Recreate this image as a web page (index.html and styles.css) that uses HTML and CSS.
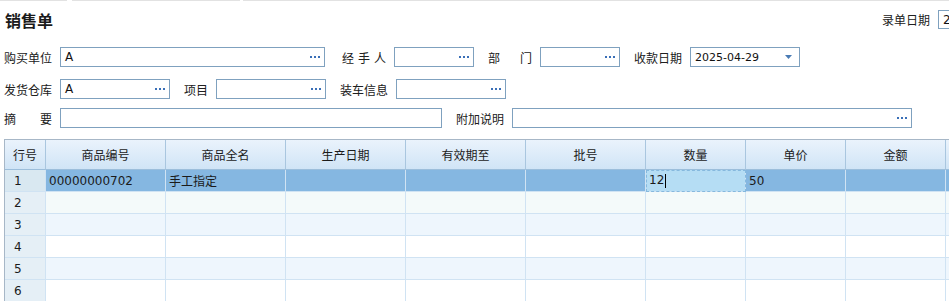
FILE: index.html
```html
<!DOCTYPE html>
<html lang="zh-CN">
<head>
    <meta charset="UTF-8">
    <title>销售单</title>
    <link rel="stylesheet" href="styles.css">
</head>
<body>
<div class="page">
    <div class="topline"><span class="seg-a"></span><span class="seg-b"></span><span class="seg-c"></span></div>

    <div class="title-row">
        <h1 class="title">销售单</h1>
        <div class="field field-right">
            <span class="label">录单日期</span>
            <div class="input w-right">2025-04-29</div>
        </div>
    </div>

    <div class="form">
        <div class="form-row">
            <div class="field">
                <span class="label">购买单位</span>
                <div class="input w-buyer">A<svg class="more" width="10" height="2" viewBox="0 0 10 2"><rect x="0" y="0" width="2" height="2"/><rect x="4" y="0" width="2" height="2"/><rect x="8" y="0" width="2" height="2"/></svg></div>
            </div>
            <div class="field shift">
                <span class="label spread w44"><span>经</span><span>手</span><span>人</span></span>
                <div class="input w80"><svg class="more" width="10" height="2" viewBox="0 0 10 2"><rect x="0" y="0" width="2" height="2"/><rect x="4" y="0" width="2" height="2"/><rect x="8" y="0" width="2" height="2"/></svg></div>
            </div>
            <div class="field">
                <span class="label spread w44"><span>部</span><span>门</span></span>
                <div class="input w80"><svg class="more" width="10" height="2" viewBox="0 0 10 2"><rect x="0" y="0" width="2" height="2"/><rect x="4" y="0" width="2" height="2"/><rect x="8" y="0" width="2" height="2"/></svg></div>
            </div>
            <div class="field">
                <span class="label">收款日期</span>
                <div class="input w110 date">2025-04-29<svg class="arrow" width="7" height="4" viewBox="0 0 7 4"><path d="M0 0H7L3.5 4Z"/></svg></div>
            </div>
        </div>

        <div class="form-row row2">
            <div class="field">
                <span class="label">发货仓库</span>
                <div class="input w110">A<svg class="more" width="10" height="2" viewBox="0 0 10 2"><rect x="0" y="0" width="2" height="2"/><rect x="4" y="0" width="2" height="2"/><rect x="8" y="0" width="2" height="2"/></svg></div>
            </div>
            <div class="field">
                <span class="label w24">项目</span>
                <div class="input w110"><svg class="more" width="10" height="2" viewBox="0 0 10 2"><rect x="0" y="0" width="2" height="2"/><rect x="4" y="0" width="2" height="2"/><rect x="8" y="0" width="2" height="2"/></svg></div>
            </div>
            <div class="field">
                <span class="label">装车信息</span>
                <div class="input w110"><svg class="more" width="10" height="2" viewBox="0 0 10 2"><rect x="0" y="0" width="2" height="2"/><rect x="4" y="0" width="2" height="2"/><rect x="8" y="0" width="2" height="2"/></svg></div>
            </div>
        </div>

        <div class="form-row row3">
            <div class="field">
                <span class="label spread"><span>摘</span><span>要</span></span>
                <div class="input w-summary"></div>
            </div>
            <div class="field">
                <span class="label">附加说明</span>
                <div class="input w-note"><svg class="more" width="10" height="2" viewBox="0 0 10 2"><rect x="0" y="0" width="2" height="2"/><rect x="4" y="0" width="2" height="2"/><rect x="8" y="0" width="2" height="2"/></svg></div>
            </div>
        </div>
    </div>

    <table class="grid">
        <thead>
            <tr>
                <th class="c-no">行号</th>
                <th class="c-wide">商品编号</th>
                <th class="c-wide">商品全名</th>
                <th class="c-wide">生产日期</th>
                <th class="c-wide">有效期至</th>
                <th class="c-wide">批号</th>
                <th class="c-num">数量</th>
                <th class="c-num">单价</th>
                <th class="c-num">金额</th>
                <th class="c-wide"></th>
            </tr>
        </thead>
        <tbody>
            <tr class="sel">
                <td class="no">1</td><td>00000000702</td><td>手工指定</td><td></td><td></td><td></td>
                <td class="edit">12<span class="caret"></span></td><td>50</td><td></td><td></td>
            </tr>
            <tr class="r-a"><td class="no">2</td><td></td><td></td><td></td><td></td><td></td><td></td><td></td><td></td><td></td></tr>
            <tr class="r-b"><td class="no">3</td><td></td><td></td><td></td><td></td><td></td><td></td><td></td><td></td><td></td></tr>
            <tr><td class="no">4</td><td></td><td></td><td></td><td></td><td></td><td></td><td></td><td></td><td></td></tr>
            <tr class="r-b"><td class="no">5</td><td></td><td></td><td></td><td></td><td></td><td></td><td></td><td></td><td></td></tr>
            <tr><td class="no">6</td><td></td><td></td><td></td><td></td><td></td><td></td><td></td><td></td><td></td></tr>
        </tbody>
    </table>
</div>
</body>
</html>
```

FILE: styles.css
```css
body {
    margin: 0;
    background: #fff;
    color: #1b1b1b;
    font-family: "DejaVu Sans", "Noto Sans CJK SC", sans-serif;
    font-size: 12px;
    overflow: hidden;
}
.page {
    width: 1070px;
}
.topline {
    display: flex;
    height: 1px;
}
.topline span {
    background: #e2e2e2;
}
.seg-a {
    width: 67px;
    margin-right: 5px;
}
.seg-b {
    width: 168px;
    margin-right: 3px;
}
.seg-c {
    flex: 1;
}
.title-row {
    display: flex;
    align-items: center;
    height: 19px;
    margin: 9px 22px 0 5px;
}
.title {
    margin: 0;
    font-size: 16px;
    font-weight: bold;
    font-family: "Noto Sans CJK SC", sans-serif;
}
.field-right {
    margin-left: auto;
}
.form {
    margin-top: 18px;
    padding-left: 4px;
}
.form-row {
    display: flex;
    align-items: center;
    gap: 14px;
    height: 20px;
}
.row2 {
    margin-top: 12px;
}
.row3 {
    margin-top: 9px;
}
.field {
    display: flex;
    align-items: center;
    gap: 8px;
}
.shift {
    margin-left: 3px;
}
.label {
    width: 48px;
    white-space: nowrap;
    font-family: "Noto Sans CJK SC", sans-serif;
    color: #202020;
}
.spread {
    display: flex;
    justify-content: space-between;
}
.w44 {
    width: 44px;
}
.w24 {
    width: 24px;
}
.input {
    box-sizing: border-box;
    height: 20px;
    display: flex;
    align-items: center;
    padding: 0 4px;
    border: 1px solid #7fa1bf;
    background: #fff;
    color: #111;
}
.w-right {
    height: 19px;
    width: 110px;
}
.w-buyer {
    width: 265px;
}
.w80 {
    width: 80px;
}
.w110 {
    width: 110px;
}
.w-summary {
    width: 382px;
}
.w-note {
    width: 400px;
}
.date {
    font-size: 11px;
}
.more {
    margin-left: auto;
    fill: #3a6fb7;
}
.arrow {
    margin-left: auto;
    margin-right: 3px;
    fill: #4a7bb4;
}
.grid {
    margin: 11px 0 0 4px;
    width: 1062px;
    table-layout: fixed;
    border-collapse: separate;
    border-spacing: 0;
    border-top: 1px solid #a7b7c7;
    border-left: 1px solid #a7b7c7;
}
.grid th,
.grid td {
    box-sizing: border-box;
    padding: 0 3px;
    white-space: nowrap;
    overflow: hidden;
}
.grid th {
    height: 30px;
    font-weight: normal;
    text-align: center;
    font-family: "Noto Sans CJK SC", sans-serif;
    background: linear-gradient(#eaf3fc, #d0e4f6);
    border-right: 1px solid #a9c6df;
    border-bottom: 1px solid #9cbedb;
}
.c-no {
    width: 41px;
}
.c-wide {
    width: 120px;
}
.c-num {
    width: 100px;
}
.grid td {
    height: 22px;
    border-right: 1px solid #d0e3f3;
    border-bottom: 1px solid #d0e3f3;
}
.grid td.no {
    padding-left: 9px;
    background: #e5eff6;
}
.r-a td {
    background: #f4fafa;
}
.r-b td {
    background: #eef6fd;
}
.sel td {
    background: #85b7e1;
}
.sel td.no {
    background: #d9e8f1;
}
.sel td.edit {
    background: #b5ddf4;
    outline: 1px dashed #86b9de;
    outline-offset: -1px;
}
.caret {
    display: inline-block;
    width: 1px;
    height: 14px;
    margin-left: 1px;
    vertical-align: middle;
    background: #000;
}
```
